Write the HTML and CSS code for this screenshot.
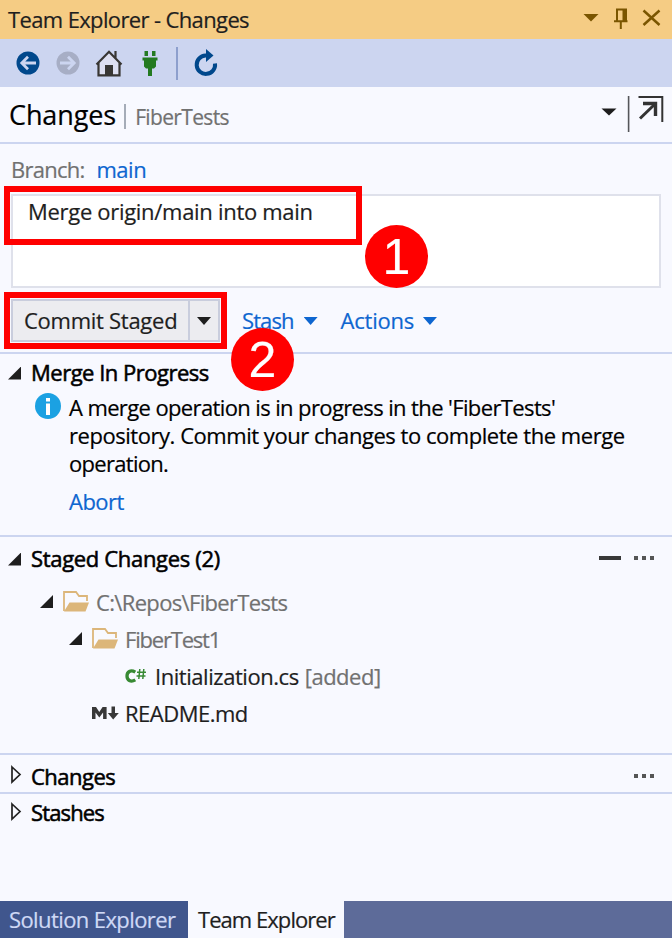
FILE: index.html
```html
<!DOCTYPE html>
<html lang="en">
<head>
<meta charset="utf-8">
<title>Team Explorer</title>
<link rel="stylesheet" href="styles.css">
</head>
<body>
<div class="panel">
  <header class="titlebar">
    <span class="title">Team Explorer - Changes</span>
    <svg class="window-icons" width="82" height="24" viewBox="0 0 82 24">
      <path d="M1.500 7h15l-7.500 7.500z" fill="#7a5500"/>
      <path d="M35 14V2.500h9V14M32 14.200h13.500M38.800 14v8" fill="none" stroke="#7a5500" stroke-width="2"/>
      <path d="M42 2v12" stroke="#7a5500" stroke-width="3"/>
      <path d="M61.500 3.500l16 14.500M77.500 3.500l-16 14.500" fill="none" stroke="#7a5500" stroke-width="2.500"/>
    </svg>
  </header>
  <nav class="toolbar">
    <svg class="nav-icon" width="24" height="24" viewBox="0 0 24 24"><circle cx="12" cy="12" r="11.500" fill="#00488c"/><path d="M20 12H6M12 5.800L5.800 12l6.200 6.200" fill="none" stroke="#ccd5f0" stroke-width="2.800"/></svg>
    <svg class="nav-icon forward" width="24" height="24" viewBox="0 0 24 24"><circle cx="12" cy="12" r="11.500" fill="#a7aec5"/><path d="M4 12h14M12 5.800l6.200 6.200-6.200 6.200" fill="none" stroke="#ccd5f0" stroke-width="2.800"/></svg>
    <svg class="home" width="28" height="28" viewBox="0 0 28 28"><path d="M4 13v13h20V13L14 3z" fill="#dddff0"/><path d="M1.500 15.500L14 2.800l12.500 12.700M3.500 14v12.300h21V14M20.500 9V2" fill="none" stroke="#383633" stroke-width="2.200"/><path d="M10 16h8v10h-8z" fill="#383633"/></svg>
    <svg class="plug" width="16" height="27" viewBox="0 0 16 27"><path d="M2.500 1h3.500v5H2.500zM10 1h3.500v5H10zM.5 7.500h15v3H14v6l-2 2h-2V26H6v-7.500H4l-2-2v-6H.5z" fill="#237a20"/></svg>
    <i class="toolbar-line"></i>
    <svg class="refresh" width="26" height="28" viewBox="0 0 26 28"><path d="M14 6.500h-1.500A9.200 9.200 0 1 0 22 14.500" fill="none" stroke="#00488c" stroke-width="4"/><path d="M13 0l7.500 6.600L13 13z" fill="#00488c"/></svg>
  </nav>
  <section class="page-head">
    <h1>Changes</h1><i class="head-bar"></i><span class="repo">FiberTests</span>
    <svg class="head-icons" width="64" height="40" viewBox="0 0 64 40">
      <path d="M1.500 13.500h15L9 20.500z" fill="#1e1e1e"/>
      <path d="M28.600 1v36" stroke="#55565a" stroke-width="1.600"/>
      <path d="M38.500 2h23.800v25" fill="none" stroke="#333" stroke-width="2"/>
      <path d="M40 23.500L54 10" fill="none" stroke="#333" stroke-width="3"/><path d="M43 8.500h12.500V21" fill="none" stroke="#333" stroke-width="3.400"/>
    </svg>
  </section>
  <section class="commit">
    <div class="branch"><span class="branch-label">Branch:</span><a class="main-link">main</a></div>
    <div class="message"><span>Merge origin/main into main</span></div>
    <div class="actions">
      <div class="commit-button"><span class="commit-label">Commit Staged</span><span class="drop"><i class="caret dark"></i></span></div>
      <a class="stash">Stash</a><i class="caret"></i>
      <a class="act">Actions</a><i class="caret"></i>
    </div>
  </section>
  <section class="merge">
    <h2><i class="open"></i><span class="h-merge">Merge In Progress</span></h2>
    <div class="notice">
      <svg class="info" width="26" height="26" viewBox="0 0 26 26"><circle cx="13" cy="13" r="13" fill="#1ba1e2"/><path d="M11 5h4v3.500h-4zM11 10.500h4V22h-4z" fill="#fff"/></svg>
      <div class="notice-text">
        <div class="n1">A merge operation is in progress in the 'FiberTests'</div>
        <div class="n2">repository. Commit your changes to complete the merge</div>
        <div class="n3">operation.</div>
        <a class="abort">Abort</a>
      </div>
    </div>
  </section>
  <section class="staged">
    <h2><i class="open"></i><span class="h-staged">Staged Changes (2)</span><i class="dash"></i><span class="dots"><i></i><i></i><i></i></span></h2>
    <div class="tree">
      <div class="node"><i class="open"></i><svg class="folder" width="26" height="21" viewBox="0 0 26 21"><path d="M1 20V1h12l3 4h8v5" fill="none" stroke="#dcb67a" stroke-width="1.800"/><path d="M1 20.500L6.500 11.500H26L22.500 20.500z" fill="#dcb67a"/></svg><span class="t-repo">C:\Repos\FiberTests</span></div>
      <div class="node level2"><i class="open"></i><svg class="folder" width="26" height="21" viewBox="0 0 26 21"><path d="M1 20V1h12l3 4h8v5" fill="none" stroke="#dcb67a" stroke-width="1.800"/><path d="M1 20.500L6.500 11.500H26L22.500 20.500z" fill="#dcb67a"/></svg><span class="t-test">FiberTest1</span></div>
      <div class="node file-cs"><svg class="cs" width="22" height="16" viewBox="0 0 22 16"><path d="M10.300 4.200C5.500 1.300 2 4 2 8s3.500 6.700 8.300 3.900" fill="none" stroke="#388a34" stroke-width="3.300"/><path d="M14.800 1l-1 10M18.800 1l-1 10M12 4.200h9M11.500 8h9" fill="none" stroke="#388a34" stroke-width="1.500"/></svg><span class="t-init">Initialization.cs</span><span class="t-added">[added]</span></div>
      <div class="node file-md"><svg class="md" width="27" height="16" viewBox="0 0 27 16"><path d="M0 14V2h4l3.300 5L10.600 2h4v12h-3.500V7.500L7.300 12.500 3.500 7.500V14z" fill="#383838"/><path d="M19.500 1.500h3.500V8h3.800L21.200 14.500 15.800 8h3.700z" fill="#383838"/></svg><span class="t-readme">README.md</span></div>
    </div>
  </section>
  <section class="changes">
    <h2><svg class="closed" width="11" height="19" viewBox="0 0 11 19"><path d="M1 2l8 7.500L1 17z" fill="none" stroke="#222" stroke-width="1.700"/></svg><span class="h-changes">Changes</span><span class="dots"><i></i><i></i><i></i></span></h2>
  </section>
  <section class="stashes">
    <h2><svg class="closed" width="11" height="19" viewBox="0 0 11 19"><path d="M1 2l8 7.500L1 17z" fill="none" stroke="#222" stroke-width="1.700"/></svg><span class="h-stashes">Stashes</span></h2>
  </section>
  <footer class="tabs"><div class="tab"><span class="tab-sol">Solution Explorer</span></div><div class="tab active"><span class="tab-team">Team Explorer</span></div></footer>
  <div class="mark box-message"></div>
  <div class="mark box-commit"></div>
  <div class="badge one">1</div>
  <div class="badge two">2</div>
</div>
</body>
</html>
```
FILE: styles.css
```css
* { box-sizing: border-box; }
body { margin: 0; }
.panel { position: relative; width: 672px; height: 938px; overflow: hidden; display: flex; flex-direction: column; background: #f8f9ff; color: #1e1e1e; font: 22px/28px "Open Sans", "Noto Sans", sans-serif; letter-spacing: -.5px; white-space: nowrap; -webkit-text-stroke: .2px currentColor; }
i { display: block; flex: none; }
svg { display: block; flex: none; }
span, a { display: block; }
a { color: #0e66d0; }
h1, h2 { margin: 0; font-size: 22px; font-weight: 400; color: #000; }
.titlebar { height: 39px; flex: none; background: #f5cc84; display: flex; align-items: center; padding: 0 8px 0 8px; justify-content: space-between; }
.title { letter-spacing: -.63px; margin-top: -2px; }
.window-icons { margin-top: -1px; }
.toolbar { height: 48px; flex: none; background: #ccd5f0; display: flex; align-items: center; padding-left: 16px; }
.forward { margin-left: 16px; }
.home { margin-left: 15px; }
.plug { margin-left: 19px; }
.toolbar-line { width: 2px; height: 33px; margin-left: 18px; background: #8d9fcd; }
.refresh { margin-left: 15px; }
.page-head { height: 57px; flex: none; display: flex; align-items: center; padding: 1px 8px 0 9px; border-bottom: 2px solid #ccd5f0; }
h1 { font-size: 27px; line-height: 36px; letter-spacing: -.1px; }
.head-bar { width: 2px; height: 25px; margin: 3px 9px 0 8px; background: #a5acb8; }
.repo { color: #717171; font-size: 21px; margin-top: 4px; letter-spacing: -.65px; }
.head-icons { margin-left: auto; margin-bottom: 1px; }
.commit { height: 210px; flex: none; padding: 11px 11px 0; border-bottom: 2px solid #ccd5f0; }
.branch { display: flex; gap: 12px; color: #717171; height: 39px; }
.branch-label { letter-spacing: -.75px; }
.message { height: 94px; background: #fff; border: 2px solid #dfe1eb; padding: 1px 15px; letter-spacing: -.3px; }
.actions { display: flex; align-items: center; margin-top: 11px; }
.commit-button { display: flex; width: 209px; height: 43px; background: #ececf0; border: 2px solid #c9cddd; line-height: 38px; letter-spacing: -.27px; }
.commit-label { width: 177px; padding-left: 11px; border-right: 2px solid #c9cddd; }
.drop { flex: 1; display: grid; place-items: center; }
.caret { width: 14px; height: 8px; margin-top: 1px; background: #0e66d0; clip-path: polygon(0 0, 100% 0, 50% 100%); }
.caret.dark { background: #1e1e1e; }
.stash { margin: -2px 10px 0 22px; letter-spacing: -.9px; }
.act { margin: -2px 9px 0 23px; letter-spacing: -.25px; }
h2 { display: flex; align-items: center; padding-left: 8px; height: 38px; -webkit-text-stroke: .55px #000; }
h2 span { margin-top: -2px; }
.open { width: 13px; height: 13px; background: #1e1e1e; clip-path: polygon(100% 0, 100% 100%, 0 100%); }
h2 .open { margin-right: 10px; }
.h-staged { letter-spacing: -.33px; }
.merge { height: 183px; flex: none; border-bottom: 2px solid #ccd5f0; }
.notice { display: flex; padding-left: 35px; color: #000; margin-top: 1px; }
.info { margin-right: 8px; }
.n1 { letter-spacing: -.62px; }
.n2 { letter-spacing: -.46px; }
.n3 { letter-spacing: -.7px; }
.abort { margin-top: 10px; }
.staged { height: 218px; flex: none; border-bottom: 2px solid #ccd5f0; }
.staged h2 { height: 44px; }
.dash { width: 22px; height: 4px; background: #383838; margin-left: auto; margin-right: 13px; margin-top: -2px; }
.dots { display: flex; gap: 4px; margin-right: 18px; }
.dots i { width: 4px; height: 4px; background: #555; }
.tree { padding-top: 2px; }
.node { height: 37px; display: flex; align-items: center; padding-left: 40px; color: #717171; }
.level2 { padding-left: 69px; }
.folder { margin: 0 7px 1px 10px; }
.t-repo { letter-spacing: -.66px; }
.t-test { letter-spacing: -1.2px; }
.file-cs { padding-left: 125px; color: #1e1e1e; }
.cs { margin-right: 8px; }
.t-init { letter-spacing: -.45px; }
.t-added { color: #717171; margin-left: 6px; }
.file-md { padding-left: 92px; color: #1e1e1e; }
.md { margin-right: 6px; }
.changes { height: 39px; flex: none; border-bottom: 2px solid #ccd5f0; }
.changes h2 { height: 43px; }
.changes .dots { margin-left: auto; }
.closed { margin: 0 9px 4px 3px; }
.stashes { flex: 1; }
.h-stashes { letter-spacing: -.85px; }
.tabs { display: flex; height: 37px; flex: none; background: #5d6b99; line-height: 36px; }
.tab { width: 188px; padding-left: 9px; background: #40568d; color: #cfd9f5; letter-spacing: -.6px; }
.active { width: 156px; padding-left: 10px; background: #f8f9ff; color: #1e1e1e; letter-spacing: -.95px; }
.mark { position: absolute; border: 6px solid #f00; }
.box-message { left: 4px; top: 186px; width: 358px; height: 59px; }
.box-commit { left: 4px; top: 292px; width: 223px; height: 57px; }
.badge { position: absolute; width: 63px; height: 63px; border-radius: 50%; background: #f00; color: #fff; text-align: center; font: 50px/65px "Liberation Sans", sans-serif; letter-spacing: 0; }
.one { left: 365px; top: 225px; }
.two { left: 231px; top: 328px; }
```
